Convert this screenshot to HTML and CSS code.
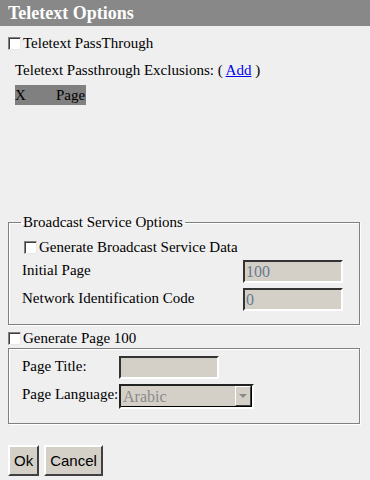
FILE: index.html
```html
<!DOCTYPE html>
<html lang="en">
<head>
  <meta charset="UTF-8">
  <title>Teletext Options</title>
  <link rel="stylesheet" href="styles.css">
</head>
<body>
  <div class="header">Teletext Options</div>

  <div class="content">
    <label class="check-row top-check">
      <input type="checkbox" class="check"> Teletext PassThrough
    </label>

    <div class="exclusions">Teletext Passthrough Exclusions: ( <a href="#">Add</a> )</div>

    <div class="table-head">
      <span class="col-x">X</span>
      <span class="col-page">Page</span>
    </div>

    <fieldset class="group broadcast">
      <legend>Broadcast Service Options</legend>
      <label class="check-row">
        <input type="checkbox" class="check"> Generate Broadcast Service Data
      </label>
      <div class="field-row">
        <span class="field-label">Initial Page</span>
        <input type="text" class="box wide" value="100" disabled>
      </div>
      <div class="field-row">
        <span class="field-label">Network Identification Code</span>
        <input type="text" class="box wide" value="0" disabled>
      </div>
    </fieldset>

    <label class="check-row page100">
      <input type="checkbox" class="check"> Generate Page 100
    </label>

    <div class="group page-box">
      <div class="field-row">
        <span class="field-label short">Page Title:</span>
        <input type="text" class="box title" disabled>
      </div>
      <div class="field-row">
        <span class="field-label short">Page Language:</span>
        <div class="select">
          <span class="select-value">Arabic</span>
          <span class="select-btn"><span class="arrow"></span></span>
        </div>
      </div>
    </div>

    <div class="buttons">
      <button type="button">Ok</button>
      <button type="button">Cancel</button>
    </div>
  </div>
</body>
</html>
```

FILE: styles.css
```css
body {
  margin: 0;
  background-color: #efefef;
  font-family: "Liberation Serif", "Times New Roman", serif;
  font-size: 15px;
  color: #000;
}

.header {
  height: 26px;
  line-height: 26px;
  padding-left: 8px;
  background-color: #888888;
  color: #fff;
  font-size: 18px;
  font-weight: bold;
}

.content {
  padding: 0 10px 0 8px;
}

.check-row {
  display: flex;
  align-items: center;
  height: 18px;
  gap: 2px;
}

.check {
  appearance: none;
  margin: 0;
  width: 13px;
  height: 13px;
  box-sizing: border-box;
  background-color: #fff;
  border: 1px solid;
  border-color: #808080 #e8e8e8 #e8e8e8 #808080;
  box-shadow: inset 1px 1px 0 #404040;
}

.top-check {
  margin-top: 8px;
}

.exclusions {
  margin: 9px 0 0 7px;
  line-height: 18px;
}

a {
  color: #0000ee;
}

.table-head {
  display: flex;
  width: 71px;
  height: 20px;
  line-height: 20px;
  margin: 6px 0 0 7px;
  background-color: #808080;
}

.col-x {
  width: 41px;
}

.group {
  margin: 0;
  border: 1px solid #808080;
  box-shadow: inset 1px 1px 0 #fff, 1px 1px 0 #fff;
}

.broadcast {
  margin-top: 108px;
  padding: 6px 16px 13px 13px;
  height: 112px;
  box-sizing: border-box;
}

.broadcast legend {
  padding: 0 2px;
  margin-left: -1px;
  line-height: 18px;
}

.broadcast .check-row {
  margin-left: 2px;
  margin-top: 1px;
}

.field-row {
  display: flex;
  align-items: flex-start;
  justify-content: space-between;
  margin-top: 4px;
}

.field-row + .field-row {
  margin-top: 5px;
}

.field-label {
  line-height: 18px;
  padding-top: 1px;
}

.box {
  box-sizing: border-box;
  height: 23px;
  margin: 0;
  padding: 0 1px;
  background-color: #d4d0c8;
  border: 2px solid;
  border-color: #333 #fff #fff #333;
  font-family: "Liberation Serif", "Times New Roman", serif;
  font-size: 16px;
  color: #6a7a90;
}

.wide {
  width: 100px;
}

.page100 {
  margin-top: 4px;
}

.page-box {
  margin-top: 1px;
  height: 76px;
  box-sizing: border-box;
  padding: 7px 14px 0 13px;
}

.page-box .field-row {
  justify-content: flex-start;
  margin-top: 0;
}

.page-box .field-row + .field-row {
  margin-top: 5px;
}

.short {
  width: 97px;
}

.title {
  width: 100px;
}

.select {
  display: flex;
  align-items: center;
  justify-content: space-between;
  box-sizing: border-box;
  width: 135px;
  height: 25px;
  background-color: #d4d0c8;
  border: 2px solid;
  border-color: #222 #fff #fff #222;
  box-shadow: inset -1px -1px 0 #000;
}

.select-value {
  padding-left: 2px;
  font-size: 16px;
  color: #8a8a8a;
}

.select-btn {
  display: flex;
  align-items: center;
  justify-content: center;
  box-sizing: border-box;
  width: 16px;
  height: 20px;
  margin-right: 1px;
  margin-bottom: 1px;
  background-color: #d4d0c8;
  border: 1px solid;
  border-color: #fff #404040 #404040 #fff;
}

.arrow {
  width: 0;
  height: 0;
  border-left: 4px solid transparent;
  border-right: 4px solid transparent;
  border-top: 4px solid #8a8a8a;
}

.buttons {
  display: flex;
  gap: 5px;
  margin-top: 21px;
}

button {
  height: 31px;
  padding: 0 4px;
  background-color: #d4d0c8;
  border: 2px solid;
  border-color: #fff #404040 #404040 #fff;
  font-family: "Liberation Sans", Arial, sans-serif;
  font-size: 15px;
  color: #000;
}
```
